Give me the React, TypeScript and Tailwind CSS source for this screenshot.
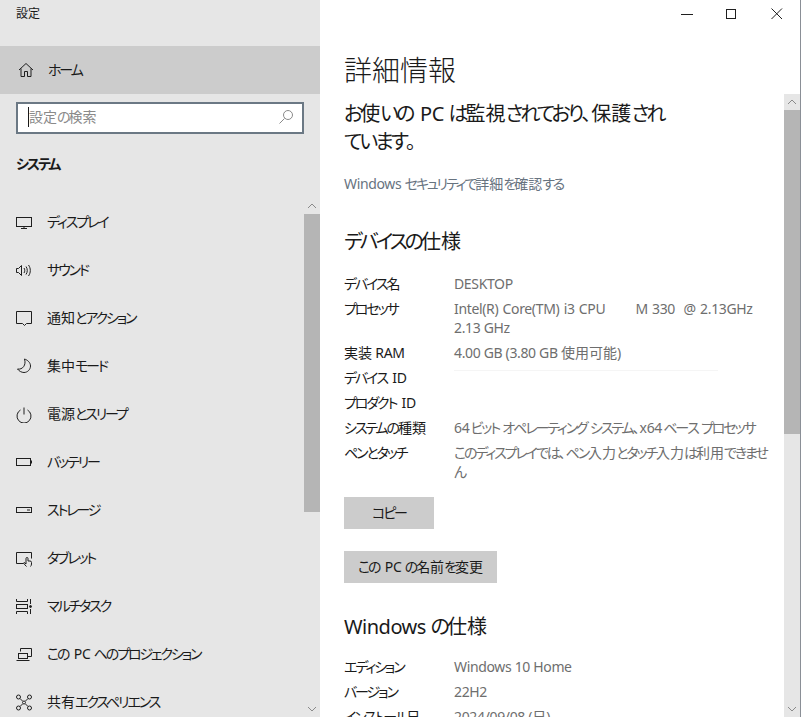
import React from "react";

const stroke = { fill: "none", stroke: "#1f1f1f", strokeWidth: 1 } as const;

const kanaClass = "tracking-[-0.15em]";
const latinClass = "tracking-tight";

function J({ t }: { t: string }) {
  const parts = t.split(/([\u3040-\u30ff]+|[A-Za-z0-9 ().@/:-]+)/).filter(Boolean);
  return (
    <>
      {parts.map((p, i) => {
        const isKana = /^[\u3040-\u30ff]/.test(p);
        const isLatin = /^[A-Za-z0-9 ().@/:-]/.test(p);
        if (isKana) {
          const beforeSpace = (parts[i + 1] ?? "").startsWith(" ");
          return (
            <React.Fragment key={i}>
              <span className={kanaClass}>{beforeSpace ? p.slice(0, -1) : p}</span>
              {beforeSpace ? <span>{p.slice(-1)}</span> : null}
            </React.Fragment>
          );
        }
        return (
          <span key={i} className={isLatin ? latinClass : undefined}>
            {p}
          </span>
        );
      })}
    </>
  );
}

const icons: Record<string, React.ReactNode> = {
  display: (<><rect x="0.5" y="3.5" width="15" height="9" /><path d="M8 12.500v2M5 14.500h6" /></>),
  sound: (<><path d="M0.500 6.500h2l3-3v10l-3-3h-2z" /><path d="M8 6c1 1.400 1 3.600 0 5M10 4.500c1.700 2.400 1.700 5.600 0 8M12.500 3c2.400 3.300 2.400 7.700 0 11" /></>),
  notify: (<path d="M0.500 1.500h15v12h-5l-2 2-2-2h-6z" />),
  moon: (<path d="M8.500 1c3 1 6 3.500 6 7 0 3.500-3 6.500-6.500 6.500-2.500 0-5-1.500-6.500-3.500 5 1 9-4 7-10z" />),
  power: (<><path d="M8 1.500v7" /><path d="M4.500 4a7 7 0 1 0 7 0" /></>),
  battery: (<><rect x="0.500" y="4.500" width="14" height="7" /><path d="M15.500 6.500v3" /></>),
  storage: (<><rect x="0.500" y="5.500" width="15" height="5" /><path d="M11 8h3" /></>),
  tablet: (<><path d="M7.500 13.500h-7v-11h15v6" /><path d="M10.500 16.500c-1-1-2-2-3-3.500l1-.5 1.500 1.500V8.500a1 1 0 0 1 2 0V11h2a1.500 1.500 0 0 1 1.500 1.500v1.500c0 1-.5 2-1 2.500" /></>),
  multi: (<><path d="M0.500 1v2.500h11V1M0.500 16v-2.500h11V16" /><rect x="0.500" y="6.500" width="11" height="4" /><path d="M14.500 1v5M14.500 11v5" /><circle cx="14.500" cy="8.500" r="1" fill="#1f1f1f" /></>),
  project: (<><path d="M4.500 5.500v-3h11v8h-4" /><rect x="2.500" y="7.500" width="9" height="5" /><path d="M0.500 14.500h13" /></>),
  share: (<><circle cx="2.500" cy="3" r="2" /><circle cx="13.500" cy="3" r="2" /><circle cx="2.500" cy="14" r="2" /><circle cx="13.500" cy="14" r="2" /><path d="M4 4.500l2.500 2.500M12 4.500L9.500 7M4 12.500L6.500 10M12 12.500L9.500 10" /><circle cx="8" cy="8.500" r="1.500" /></>),
};

function Icon({ name }: { name: string }) {
  return (
    <svg width="17" height="17" viewBox="0 0 17 17" {...stroke} className="shrink-0">
      {icons[name]}
    </svg>
  );
}

function Chevron({ up }: { up?: boolean }) {
  return (
    <svg width="16" height="16" viewBox="0 0 16 16" fill="none" stroke="#8a8a8a" strokeWidth="1">
      <path d={up ? "M4 10l4-4 4 4" : "M4 6l4 4 4-4"} />
    </svg>
  );
}

const nav: [string, string][] = [
  ["display", "ディスプレイ"],
  ["sound", "サウンド"],
  ["notify", "通知とアクション"],
  ["moon", "集中モード"],
  ["power", "電源とスリープ"],
  ["battery", "バッテリー"],
  ["storage", "ストレージ"],
  ["tablet", "タブレット"],
  ["multi", "マルチタスク"],
  ["project", "この PC へのプロジェクション"],
  ["share", "共有エクスペリエンス"],
];

function Row({ label, children }: { label: string; children?: React.ReactNode }) {
  return (
    <div className="flex pb-1.5 text-sm leading-[19px]">
      <div className="w-[110px] shrink-0 whitespace-pre text-[#1a1a1a]">
        <J t={label} />
      </div>
      <div className="whitespace-pre text-[#6e6e6e]">{children}</div>
    </div>
  );
}

export default function App() {
  return (
    <div
      className="flex h-screen w-full overflow-hidden bg-white text-[#1a1a1a] [font-feature-settings:'palt']"
      style={{ fontFamily: '"Noto Sans", "Noto Sans CJK JP", sans-serif' }}
    >
      <aside className="flex w-80 shrink-0 flex-col bg-[#e6e6e6]">
        <div className="h-11.5 pl-4 pt-1.5 text-xs leading-4">設定</div>
        <div className="flex h-12 shrink-0 items-center gap-3.5 bg-[#cccccc] pl-4.5 text-sm">
          <svg width="16" height="16" viewBox="0 0 16 16" {...stroke} className="shrink-0">
            <path d="M1 8l7-6.500L15 8M3 6.500v8h3.500V9.500h3v5H13v-8" />
          </svg>
          <span><J t="ホーム" /></span>
        </div>
        <div className="mx-4 mt-2 flex h-8 shrink-0 items-center justify-between border-2 border-[#6b7884] bg-white pb-0.5 pl-2.5 pr-2 text-sm text-[#8a8a8a]">
          <span className="border-l border-[#1a1a1a] leading-5"><J t="設定の検索" /></span>
          <svg width="16" height="16" viewBox="0 0 16 16" fill="none" stroke="#8a8a8a" strokeWidth="1">
            <circle cx="10" cy="6" r="4.500" />
            <path d="M6.500 9.500L1.500 14.500" />
          </svg>
        </div>
        <div className="mt-5 pl-4 text-sm font-bold leading-5"><J t="システム" /></div>
        <div className="mt-6 flex min-h-0 flex-1">
          <div className="min-w-0 flex-1">
            {nav.map(([icon, label]) => (
              <div key={label} className="flex h-12 items-center gap-3.5 pl-4 text-sm">
                <Icon name={icon} />
                <span className="whitespace-pre"><J t={label} /></span>
              </div>
            ))}
          </div>
          <div className="flex w-4 shrink-0 flex-col">
            <div className="h-4"><Chevron up /></div>
            <div className="h-[298px] bg-[#b5b5b5]" />
            <div className="flex-1" />
            <div className="h-4"><Chevron /></div>
          </div>
        </div>
      </aside>

      <main className="flex min-w-0 flex-1 flex-col border-r border-[#8a8f96]">
        <div className="relative h-23.5 shrink-0 pl-6 pt-12">
          <div className="absolute right-0 top-0 flex items-center">
            <div className="flex h-7 w-11.5 items-center justify-center pl-1">
              <svg width="12" height="12" viewBox="0 0 12 12" {...stroke}><path d="M0 6.500h12" /></svg>
            </div>
            <div className="flex h-7 w-11.5 items-center justify-center">
              <svg width="12" height="12" viewBox="0 0 12 12" {...stroke}><rect x="1.500" y="1.500" width="9" height="9" /></svg>
            </div>
            <div className="flex h-7 w-11.5 items-center justify-center">
              <svg width="12" height="12" viewBox="0 0 12 12" {...stroke}><path d="M.5.5l10.500 10.500M11 .5L.5 11" /></svg>
            </div>
          </div>
          <div className="text-[28px] leading-11 font-light">詳細情報</div>
        </div>

        <div className="flex min-h-0 flex-1">
          <div className="min-w-0 flex-1 overflow-hidden pl-6 pt-1.5">
            <div className="whitespace-pre text-xl leading-7">
              <J t="お使いの PC は監視されており、保護され" /><br /><J t="ています。" />
            </div>
            <div className="mt-4.5 whitespace-pre text-sm leading-5 text-[#67737f]"><J t="Windows セキュリティで詳細を確認する" /></div>
            <div className="mt-8.5 text-xl leading-7"><J t="デバイスの仕様" /></div>
            <div className="mt-4.5">
              <Row label="デバイス名"><J t="DESKTOP" /></Row>
              <Row label="プロセッサ">
                <span className="[word-spacing:1px]"><J t="Intel(R) Core(TM) i3 CPU       M 330  @ 2.13GHz" /></span><br /><J t="2.13 GHz" />
              </Row>
              <Row label="実装 RAM"><J t="4.00 GB (3.80 GB 使用可能)" /></Row>
              <Row label="デバイス ID"><div className="mt-0.5 h-px w-66 bg-neutral-100" /></Row>
              <Row label="プロダクト ID" />
              <Row label="システムの種類"><span className="[word-spacing:-2px]"><J t="64 ビット オペレーティング システム、x64 ベース プロセッサ" /></span></Row>
              <Row label="ペンとタッチ"><J t="このディスプレイでは、ペン入力とタッチ入力は利用できませ" /><br /><J t="ん" /></Row>
            </div>
            <button className="mt-2.5 block h-8 w-[90px] bg-[#cccccc] text-sm"><J t="コピー" /></button>
            <button className="mt-5.5 block h-8 whitespace-pre bg-[#cccccc] px-3.5 text-sm"><J t="この PC の名前を変更" /></button>
            <div className="mt-7.5 text-xl leading-7"><J t="Windows の仕様" /></div>
            <div className="mt-4">
              <Row label="エディション"><J t="Windows 10 Home" /></Row>
              <Row label="バージョン"><J t="22H2" /></Row>
              <Row label="インストール日"><J t="2024/09/08 (日)" /></Row>
            </div>
          </div>
          <div className="flex w-4 shrink-0 flex-col bg-[#e6e6e6]">
            <div className="h-4"><Chevron up /></div>
            <div className="h-81 bg-[#b5b5b5]" />
            <div className="flex-1" />
            <div className="h-4"><Chevron /></div>
          </div>
        </div>
      </main>
    </div>
  );
}
